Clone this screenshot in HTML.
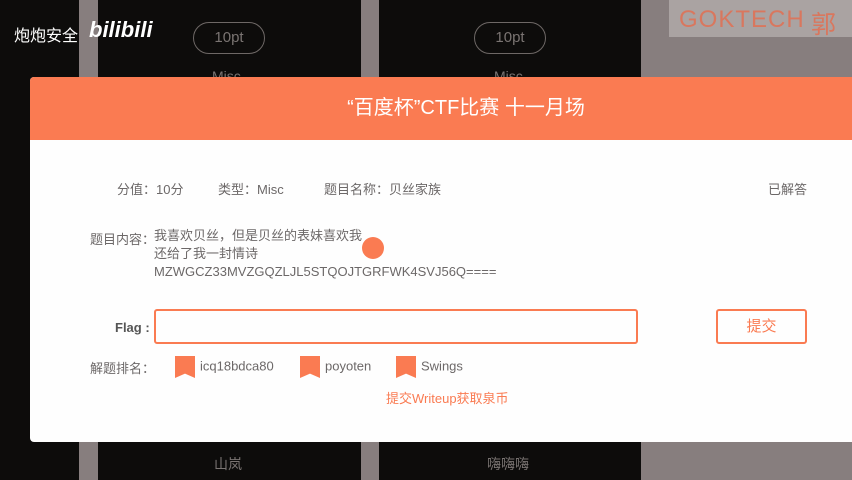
<!DOCTYPE html>
<html><head><meta charset="utf-8"><style>
*{margin:0;padding:0;box-sizing:border-box}
body{width:852px;height:480px;overflow:hidden;background:#877e7e;position:relative;font-family:"Liberation Sans","Noto Sans CJK SC",sans-serif}
.blk{position:absolute;top:0;height:480px;background:#0d0c0b}
.a{position:absolute;white-space:nowrap}
.pill{position:absolute;top:22px;width:72px;height:32px;border:1.5px solid #6e6866;border-radius:16px;color:#7a7472;font-size:15px;text-align:center;line-height:29px}
#modal{position:absolute;left:30px;top:77px;width:830px;height:365px;background:#fefefe;border-radius:4px;overflow:hidden}
#hd{height:63px;background:#fa7b52;color:#fff;font-size:20px;text-align:center;line-height:63px;padding-left:42px}
.g{color:#6c6868;font-size:13px}
.tag{display:inline-block;width:20px;height:22px;background:#fa7b52;vertical-align:middle;margin-right:5px;clip-path:polygon(0 0,100% 0,100% 100%,50% 80%,0 100%)}
</style></head><body>
<div class="blk" style="left:0;width:79px"></div>
<div class="blk" style="left:98px;width:263px"></div>
<div class="blk" style="left:379px;width:262px"></div>
<div class="a" style="left:669px;top:0;width:183px;height:37px;background:#aaa3a2"></div>
<div class="a" style="left:679px;top:6px;color:#d9775e;font-size:24px;letter-spacing:1px">GOKTECH</div>
<div class="a" style="left:811px;top:5px;color:#d9775e;font-size:25px">郭</div>
<div class="a" style="left:14px;top:22px;color:#fff;font-size:16px">炮炮安全</div>
<div class="a" style="left:89px;top:17px;color:#fff;font-size:22px;font-weight:bold;font-style:italic">bilibili</div>
<div class="pill" style="left:193px">10pt</div>
<div class="pill" style="left:474px">10pt</div>
<div class="a" style="left:212px;top:68px;color:#7a7472;font-size:14px">Misc</div>
<div class="a" style="left:494px;top:68px;color:#7a7472;font-size:14px">Misc</div>
<div class="a" style="left:214px;top:454px;color:#7a7472;font-size:14px">山岚</div>
<div class="a" style="left:487px;top:454px;color:#7a7472;font-size:14px">嗨嗨嗨</div>
<div id="modal">
<div id="hd">“百度杯”CTF比赛 十一月场</div>
<div class="a g" style="left:87px;top:102px">分值：10分</div>
<div class="a g" style="left:188px;top:102px">类型：Misc</div>
<div class="a g" style="left:294px;top:102px">题目名称：贝丝家族</div>
<div class="a g" style="left:738px;top:102px">已解答</div>
<div class="a g" style="left:60px;top:152px">题目内容：</div>
<div class="a g" style="left:124px;top:150px;line-height:18px">我喜欢贝丝，但是贝丝的表妹喜欢我<br>还给了我一封情诗<br>MZWGCZ33MVZGQZLJL5STQOJTGRFWK4SVJ56Q====</div>
<div class="a" style="left:332px;top:160px;width:22px;height:22px;border-radius:50%;background:#fa7b52"></div>
<div class="a g" style="left:85px;top:243px;font-weight:bold;color:#555">Flag :</div>
<div class="a" style="left:124px;top:232px;width:484px;height:35px;border:2px solid #fa7b52;border-radius:3px"></div>
<div class="a" style="left:686px;top:232px;width:91px;height:35px;border:2px solid #fa7b52;border-radius:3px;color:#fa7b52;font-size:15px;text-align:center;line-height:31px">提交</div>
<div class="a g" style="left:60px;top:281px">解题排名：</div>
<div class="a g" style="left:145px;top:279px"><span class="tag"></span>icq18bdca80</div>
<div class="a g" style="left:270px;top:279px"><span class="tag"></span>poyoten</div>
<div class="a g" style="left:366px;top:279px"><span class="tag"></span>Swings</div>
<div class="a" style="left:356px;top:311px;color:#fa7b52;font-size:13px">提交Writeup获取泉币</div>
</div>
</body></html>
